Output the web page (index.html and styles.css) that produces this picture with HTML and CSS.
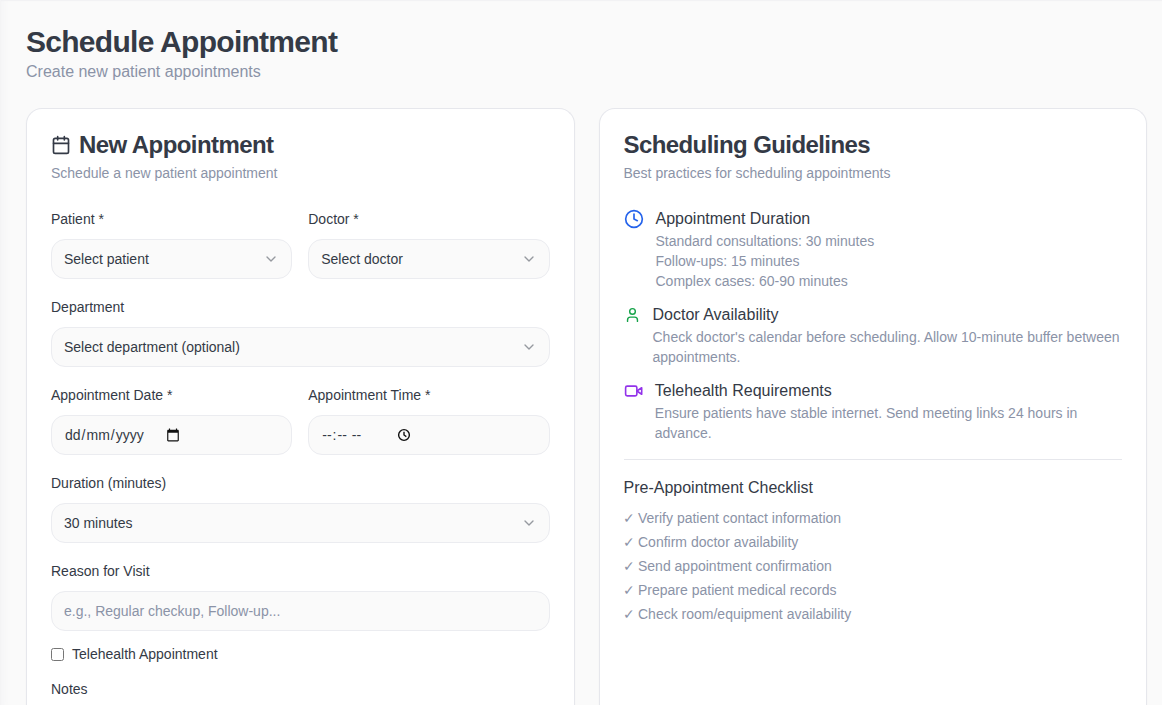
FILE: index.html
```html
<!DOCTYPE html>
<html lang="en">
<head>
<meta charset="utf-8">
<title>Schedule Appointment</title>
<link rel="stylesheet" href="styles.css">
</head>
<body>
<main class="page">
  <header class="page-head">
    <h1>Schedule Appointment</h1>
    <p>Create new patient appointments</p>
  </header>
  <div class="columns">
    <section class="card">
      <div class="card-head">
        <h2><svg class="icon title-icon" viewBox="0 0 24 24"><path d="M8 2v4M16 2v4M3 10h18"/><rect x="3" y="4" width="18" height="18" rx="2"/></svg>New Appointment</h2>
        <p>Schedule a new patient appointment</p>
      </div>
      <form class="form">
        <div class="pair">
          <div class="field"><label>Patient *</label><div class="control">Select patient<svg class="icon chevron" viewBox="0 0 24 24"><path d="m6 9 6 6 6-6"/></svg></div></div>
          <div class="field"><label>Doctor *</label><div class="control">Select doctor<svg class="icon chevron" viewBox="0 0 24 24"><path d="m6 9 6 6 6-6"/></svg></div></div>
        </div>
        <div class="field"><label>Department</label><div class="control">Select department (optional)<svg class="icon chevron" viewBox="0 0 24 24"><path d="m6 9 6 6 6-6"/></svg></div></div>
        <div class="pair">
          <div class="field"><label>Appointment Date *</label><div class="control picker"><span class="date-text"><span>dd</span><span>/</span><span>mm</span><span>/</span><span>yyyy</span></span><svg class="picker-icon" viewBox="0 0 24 24"><path d="M20 3h-1V1h-2v2H7V1H5v2H4c-1.1 0-2 .9-2 2v16c0 1.1.9 2 2 2h16c1.1 0 2-.9 2-2V5c0-1.1-.9-2-2-2zm0 18H4V8h16v13z"/></svg></div></div>
          <div class="field"><label>Appointment Time *</label><div class="control picker"><span class="time-text"><span>--</span><span>:</span><span>--</span><span class="meridiem">--</span></span><svg class="picker-icon clock" viewBox="0 0 24 24"><circle cx="12" cy="12" r="9.2"/><path d="M12 6.500V12l4 2.700"/></svg></div></div>
        </div>
        <div class="field"><label>Duration (minutes)</label><div class="control">30 minutes<svg class="icon chevron" viewBox="0 0 24 24"><path d="m6 9 6 6 6-6"/></svg></div></div>
        <div class="field"><label for="reason">Reason for Visit</label><input id="reason" class="control" type="text" placeholder="e.g., Regular checkup, Follow-up..."></div>
        <div class="check-row"><input type="checkbox" id="tele"><label for="tele">Telehealth Appointment</label></div>
        <div class="field"><label>Notes</label></div>
      </form>
    </section>
    <section class="card">
      <div class="card-head">
        <h2>Scheduling Guidelines</h2>
        <p>Best practices for scheduling appointments</p>
      </div>
      <div class="guides">
        <div class="guide"><svg class="icon guide-icon blue" viewBox="0 0 24 24"><circle cx="12" cy="12" r="10"/><path d="M12 6v6l4 2"/></svg>
          <div><h3>Appointment Duration</h3><p>Standard consultations: 30 minutes<br>Follow-ups: 15 minutes<br>Complex cases: 60-90 minutes</p></div></div>
        <div class="guide"><svg class="icon guide-icon green" viewBox="0 0 24 24"><path d="M19 21v-2a4 4 0 0 0-4-4H9a4 4 0 0 0-4 4v2"/><circle cx="12" cy="7" r="4"/></svg>
          <div><h3>Doctor Availability</h3><p>Check doctor's calendar before scheduling. Allow 10-minute buffer between appointments.</p></div></div>
        <div class="guide"><svg class="icon guide-icon purple" viewBox="0 0 24 24"><path d="m22 8-6 4 6 4V8Z"/><rect x="2" y="6" width="14" height="12" rx="2"/></svg>
          <div><h3>Telehealth Requirements</h3><p>Ensure patients have stable internet. Send meeting links 24 hours in advance.</p></div></div>
      </div>
      <div class="checklist">
        <h3>Pre-Appointment Checklist</h3>
        <ul>
          <li><span class="tick">✓</span>Verify patient contact information</li>
          <li><span class="tick">✓</span>Confirm doctor availability</li>
          <li><span class="tick">✓</span>Send appointment confirmation</li>
          <li><span class="tick">✓</span>Prepare patient medical records</li>
          <li><span class="tick">✓</span>Check room/equipment availability</li>
        </ul>
      </div>
    </section>
  </div>
</main>
</body>
</html>
```
FILE: styles.css
```css
*, *::before, *::after { box-sizing: border-box; margin: 0; padding: 0; }
body {
  background: #fafafa;
  color: #343a46;
  font-family: "Liberation Sans", Arial, sans-serif;
  font-size: 16px;
  line-height: 24px;
}
.page {
  display: flex;
  flex-direction: column;
  height: 705px;
  overflow: hidden;
  padding: 24px 15px 0 25px;
  border-left: 1px solid #f4f4f5;
  box-shadow: inset 0 2px 1px -1px #f1f1f3, inset 8px 0 10px -8px #f2f2f4;
}
.page-head h1 { font-size: 30px; line-height: 36px; font-weight: 700; letter-spacing: -0.72px; }
.page-head p { color: #8b93a7; }
.columns { display: grid; grid-template-columns: 1fr 1fr; gap: 24px; flex: 1; margin-top: 24px; }
.card {
  padding: 24px 24px 0;
  background: #fff;
  border: 1px solid #e6e7ec;
  border-bottom: 0;
  border-radius: 16px 16px 0 0;
  box-shadow: 0 1px 2px rgba(0, 0, 0, 0.04);
}
.card-head { margin-bottom: 24px; }
.card-head h2 {
  display: flex;
  align-items: center;
  gap: 8px;
  font-size: 24px;
  line-height: 24px;
  font-weight: 700;
  letter-spacing: -0.58px;
}
.card-head p { margin-top: 6px; font-size: 14px; line-height: 20px; color: #8b93a7; }
.icon { fill: none; stroke: currentColor; stroke-width: 2; stroke-linecap: round; stroke-linejoin: round; flex: none; }
.title-icon { width: 20px; height: 20px; }
.form { display: flex; flex-direction: column; gap: 16px; }
.pair { display: grid; grid-template-columns: 1fr 1fr; gap: 16px; }
.field { display: flex; flex-direction: column; gap: 8px; font-size: 14px; }
.control {
  display: flex;
  align-items: center;
  justify-content: space-between;
  width: 100%;
  height: 40px;
  padding: 0 12px;
  font: 14px/20px "Liberation Sans", Arial, sans-serif;
  color: inherit;
  background: #fafafa;
  border: 1px solid #ebecf0;
  border-radius: 14px;
}
.control::placeholder { color: #8b93a7; opacity: 1; }
.chevron { width: 16px; height: 16px; opacity: 0.5; }
.picker { justify-content: flex-start; }
.picker-icon { width: 14px; height: 14px; fill: #111; }
.clock { fill: none; stroke: #111; stroke-width: 2.4; }
.date-text, .time-text { display: flex; width: 102px; padding-left: 1px; gap: 1px; }
.time-text { width: 76px; }
.meridiem { margin-left: 4px; }
.check-row { display: flex; align-items: center; gap: 8px; height: 14px; font-size: 14px; line-height: 14px; }
.check-row input { width: 13px; height: 13px; }
.guides { display: flex; flex-direction: column; gap: 12px; }
.guide { display: flex; align-items: flex-start; gap: 12px; }
.guide-icon { height: 20px; margin-top: 2px; }
.blue { width: 20px; color: #2563eb; }
.green { width: 17px; color: #16a34a; }
.purple { width: 19.3px; color: #9333ea; }
h3 { font-size: 16px; line-height: 24px; font-weight: 400; }
.guide p { font-size: 14px; line-height: 20px; color: #8b93a7; }
.checklist { margin-top: 16px; padding-top: 16px; border-top: 1px solid #e6e7ec; }
.checklist ul { display: flex; flex-direction: column; gap: 4px; margin-top: 8px; list-style: none; }
.checklist li { display: flex; font-size: 14px; line-height: 20px; color: #8b93a7; }
.tick { width: 14.5px; margin-left: -1px; margin-right: 1px; }
```
